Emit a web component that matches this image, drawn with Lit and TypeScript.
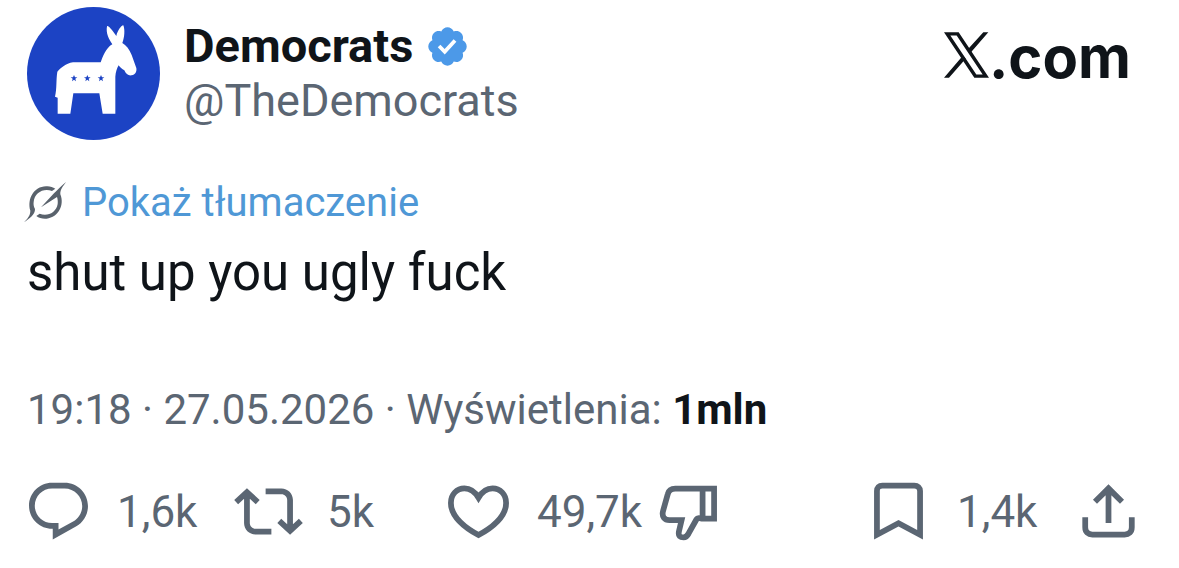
import { LitElement, html, css, svg } from "lit";
import { customElement, property } from "lit/decorators.js";

const icons: Record<string, unknown> = {
  reply: svg`<path fill="currentColor" d="M1.751 10c0-4.42 3.584-8 8.005-8h4.366c4.49 0 8.129 3.64 8.129 8.13 0 2.96-1.607 5.68-4.196 7.11l-8.054 4.46v-3.69h-.067c-4.49.1-8.183-3.51-8.183-8.01zm8.005-6c-3.317 0-6.005 2.69-6.005 6 0 3.37 2.77 6.08 6.138 6.01l.351-.01h1.761v2.3l5.087-2.81c1.951-1.08 3.163-3.13 3.163-5.36 0-3.39-2.744-6.13-6.129-6.13H9.756z"/>`,
  repost: svg`<path fill="currentColor" d="M4.5 3.88l4.432 4.14-1.364 1.46L5.5 7.55V16c0 1.1.896 2 2 2H13v2H7.5c-2.209 0-4-1.79-4-4V7.55L1.432 9.48.068 8.02 4.5 3.88zM16.5 6H11V4h5.500c2.209 0 4 1.790 4 4v8.450l2.068-1.930 1.364 1.460-4.432 4.140-4.432-4.140 1.364-1.460 2.068 1.930V8c0-1.100-.896-2-2-2z"/>`,
  like: svg`<path fill="none" stroke="currentColor" stroke-width="2" d="M12 7.200C10.700 5 8.900 3.950 7.100 3.950C4.500 3.950 2.400 6 2.400 9C2.400 13.400 6.300 17.100 12 20.200C17.700 17.100 21.600 13.400 21.600 9C21.600 6 19.500 3.950 16.900 3.950C15.100 3.950 13.300 5 12 7.200Z"/>`,
  dislike: svg`<path fill="none" stroke="currentColor" stroke-width="2" d="M20.900 4H7.400C6.100 4 5.100 4.700 4.800 5.900L3.150 11.800C2.600 13.800 3.700 15 5.400 15H9.600L8.700 18.800C8.300 20.700 9.200 21 10.300 21C11.300 21 11.600 20.500 12 19.700L14.800 14.700C15.300 13.800 15.900 14.500 17 14.500H20.900ZM16.900 4V14.500"/>`,
  bookmark: svg`<path fill="none" stroke="currentColor" stroke-width="2" d="M4.500 4.900C4.500 3.700 5.200 3 6.400 3H17.500C18.700 3 19.500 3.700 19.500 4.900V20.100L12 16.100L4.500 20.100Z"/>`,
  share: svg`<path fill="none" stroke="currentColor" stroke-width="2" d="M12 16V4M7.300 8.600L12 3.950L16.700 8.600M3.900 14V17.500C3.900 19.200 4.900 20 6.400 20H17.600C19.100 20 20.100 19.200 20.100 17.500V14"/>`,
};

@customElement("post-action")
export class PostAction extends LitElement {
  @property() icon = "";
  @property() label = "";
  @property() count = "";

  static styles = css`
    :host { display: block; }
    .action {
      display: flex;
      align-items: center;
      gap: 24px;
      padding: 0;
      border: 0;
      background: none;
      color: inherit;
      font: inherit;
      white-space: nowrap;
      cursor: pointer;
    }
    .icon { width: 69px; height: 69px; flex: none; }
  `;

  render() {
    return html`<button class="action" aria-label=${`${this.label} ${this.count}`.trim()}>
      <svg class="icon" viewBox="0 0 24 24" aria-hidden="true">${icons[this.icon]}</svg>
      ${this.count ? html`<span>${this.count}</span>` : ""}
    </button>`;
  }
}

@customElement("app-root")
export class AppRoot extends LitElement {
  static styles = css`
    :host {
      display: block;
      background: #fff;
      color: #0f1419;
      font-family: Roboto, "Liberation Sans", sans-serif;
    }
    a { color: inherit; text-decoration: none; }
    .post { padding: 7px 36px 22px 27px; }
    .header { display: flex; align-items: flex-start; gap: 24px; }
    .avatar { width: 133px; height: 133px; flex: none; display: block; }
    .author { flex: 1; padding-top: 12px; }
    .name-row { display: flex; align-items: center; gap: 12px; }
    .name { font-size: 47px; line-height: 54px; font-weight: 700; }
    .badge { width: 45px; height: 45px; }
    .handle { display: block; font-size: 45px; line-height: 56px; color: #5b6673; }
    .brand {
      display: flex;
      align-items: baseline;
      margin: 15px 12px 0 0;
      font: 700 58px/70px Inter, "Liberation Sans", sans-serif;
    }
    .brand-mark { width: 45px; height: 46px; }
    .translate {
      display: flex;
      align-items: center;
      gap: 16px;
      margin: 36px 0 0 -3px;
      font-size: 40px;
      line-height: 54px;
      color: #4f98d6;
    }
    .grok { width: 42px; height: 42px; color: #59626c; }
    .body { margin: 11px 0 0; font-size: 51px; line-height: 64px; }
    .meta { margin: 79px 0 0; font-size: 42px; line-height: 52px; color: #5b6673; }
    .meta strong { color: #0f1419; }
    .actions {
      display: grid;
      grid-template-columns: repeat(5, minmax(0, 1fr)) auto;
      margin: 41px 0 0 -3px;
      font-size: 44px;
      line-height: 52px;
      color: #5b6673;
    }
  `;

  render() {
    return html`<article class="post">
      <header class="header">
        <svg class="avatar" viewBox="36 21 399 399" role="img" aria-label="Democrats">
          <circle cx="235.500" cy="220.500" r="199.500" fill="#1c43c4"/>
          <path fill="#fff" d="M257 187C263 172 272 144 292 133C282 118 272 100 276 79C279 75 289 87 304 108C307 93 318 77 325 76C330 88 329 112 322 129C333 135 343 148 350 165L364 204C366 215 360 225 350 226C340 228 333 222 328 211C321 207 315 202 311 196C306 204 302 217 301 230V341H263L253 280H175L166 341H128V293L120 290C126 265 123 238 127 215C139 203 151 191 174 187Z"/>
          <g fill="#1c43c4">
            ${[177, 217, 258].map((x) => svg`<path transform="translate(${x} 235)" d="M0-10L3-3L10-3L4 1.500L6 9L0 4L-6 9L-4 1.500L-10-3L-3-3Z"/>`)}
          </g>
        </svg>
        <div class="author">
          <div class="name-row">
            <a class="name" href="#">Democrats</a>
            <svg class="badge" viewBox="0 0 22 22" role="img" aria-label="Verified">
              <path fill="#4c99e8" d="M20.396 11c-.018-.646-.215-1.275-.57-1.816-.354-.54-.852-.972-1.438-1.246.223-.607.27-1.264.14-1.897-.131-.634-.437-1.218-.882-1.687-.47-.445-1.053-.75-1.687-.882-.633-.13-1.29-.083-1.897.14-.273-.587-.704-1.086-1.245-1.44S11.647 1.62 11 1.604c-.646.017-1.273.213-1.813.568s-.969.854-1.24 1.44c-.608-.223-1.267-.272-1.902-.14-.635.13-1.22.436-1.69.882-.445.47-.749 1.055-.878 1.688-.13.633-.08 1.29.144 1.896-.587.274-1.087.705-1.443 1.245-.356.54-.555 1.17-.574 1.817.02.647.218 1.276.574 1.817.356.54.856.972 1.443 1.245-.224.606-.274 1.263-.144 1.896.13.634.433 1.218.877 1.688.47.443 1.054.747 1.687.878.633.132 1.29.084 1.897-.136.274.586.705 1.084 1.246 1.439.54.354 1.17.551 1.816.569.647-.016 1.276-.213 1.817-.567s.972-.854 1.245-1.44c.604.239 1.266.296 1.903.164.636-.132 1.22-.447 1.68-.907.46-.46.776-1.044.908-1.681s.075-1.299-.165-1.903c.586-.274 1.084-.705 1.439-1.246.354-.54.551-1.17.569-1.816z"/>
              <path fill="#fff" d="M9.662 14.850l-3.429-3.428 1.293-1.302 2.072 2.072 4.400-4.794 1.347 1.246z"/>
            </svg>
          </div>
          <a class="handle" href="#">@TheDemocrats</a>
        </div>
        <div class="brand">
          <svg class="brand-mark" viewBox="0 0 135 137" role="img" aria-label="X">
            <path fill="currentColor" d="M118 0H133L81 60L73 50ZM0 137H15L65 80L57 70Z"/>
            <path fill="currentColor" fill-rule="evenodd" d="M0 0H44L135 137H91ZM19 10L97 127H116L38 10Z"/>
          </svg><span>.com</span>
        </div>
      </header>
      <a class="translate" href="#">
        <svg class="grok" viewBox="0 0 126 126" aria-hidden="true">
          <path fill="currentColor" d="M0 121C10 110 19 101 19 86C9 51 29 14 66 13C77 12 86 15 94 20L84 27C58 17 31 33 29 60C28 67 29 74 33 81C34 98 15 110 0 121ZM126 0C118 12 108 22 109 37C122 68 104 106 68 110C55 111 45 108 37 102L47 95C69 105 97 92 101 66C102 58 101 51 99 45L51 76L90 34C99 25 110 14 126 0Z"/>
        </svg>
        <span>Pokaż tłumaczenie</span>
      </a>
      <p class="body">shut up you ugly fuck</p>
      <p class="meta"><time datetime="2026-05-27T19:18">19:18 · 27.05.2026</time> · Wyświetlenia: <strong>1mln</strong></p>
      <div class="actions">
        <post-action icon="reply" label="Odpowiedz" count="1,6k"></post-action>
        <post-action icon="repost" label="Podaj dalej" count="5k"></post-action>
        <post-action icon="like" label="Polub" count="49,7k"></post-action>
        <post-action icon="dislike" label="Nie lubię"></post-action>
        <post-action icon="bookmark" label="Zakładka" count="1,4k"></post-action>
        <post-action icon="share" label="Udostępnij"></post-action>
      </div>
    </article>`;
  }
}
